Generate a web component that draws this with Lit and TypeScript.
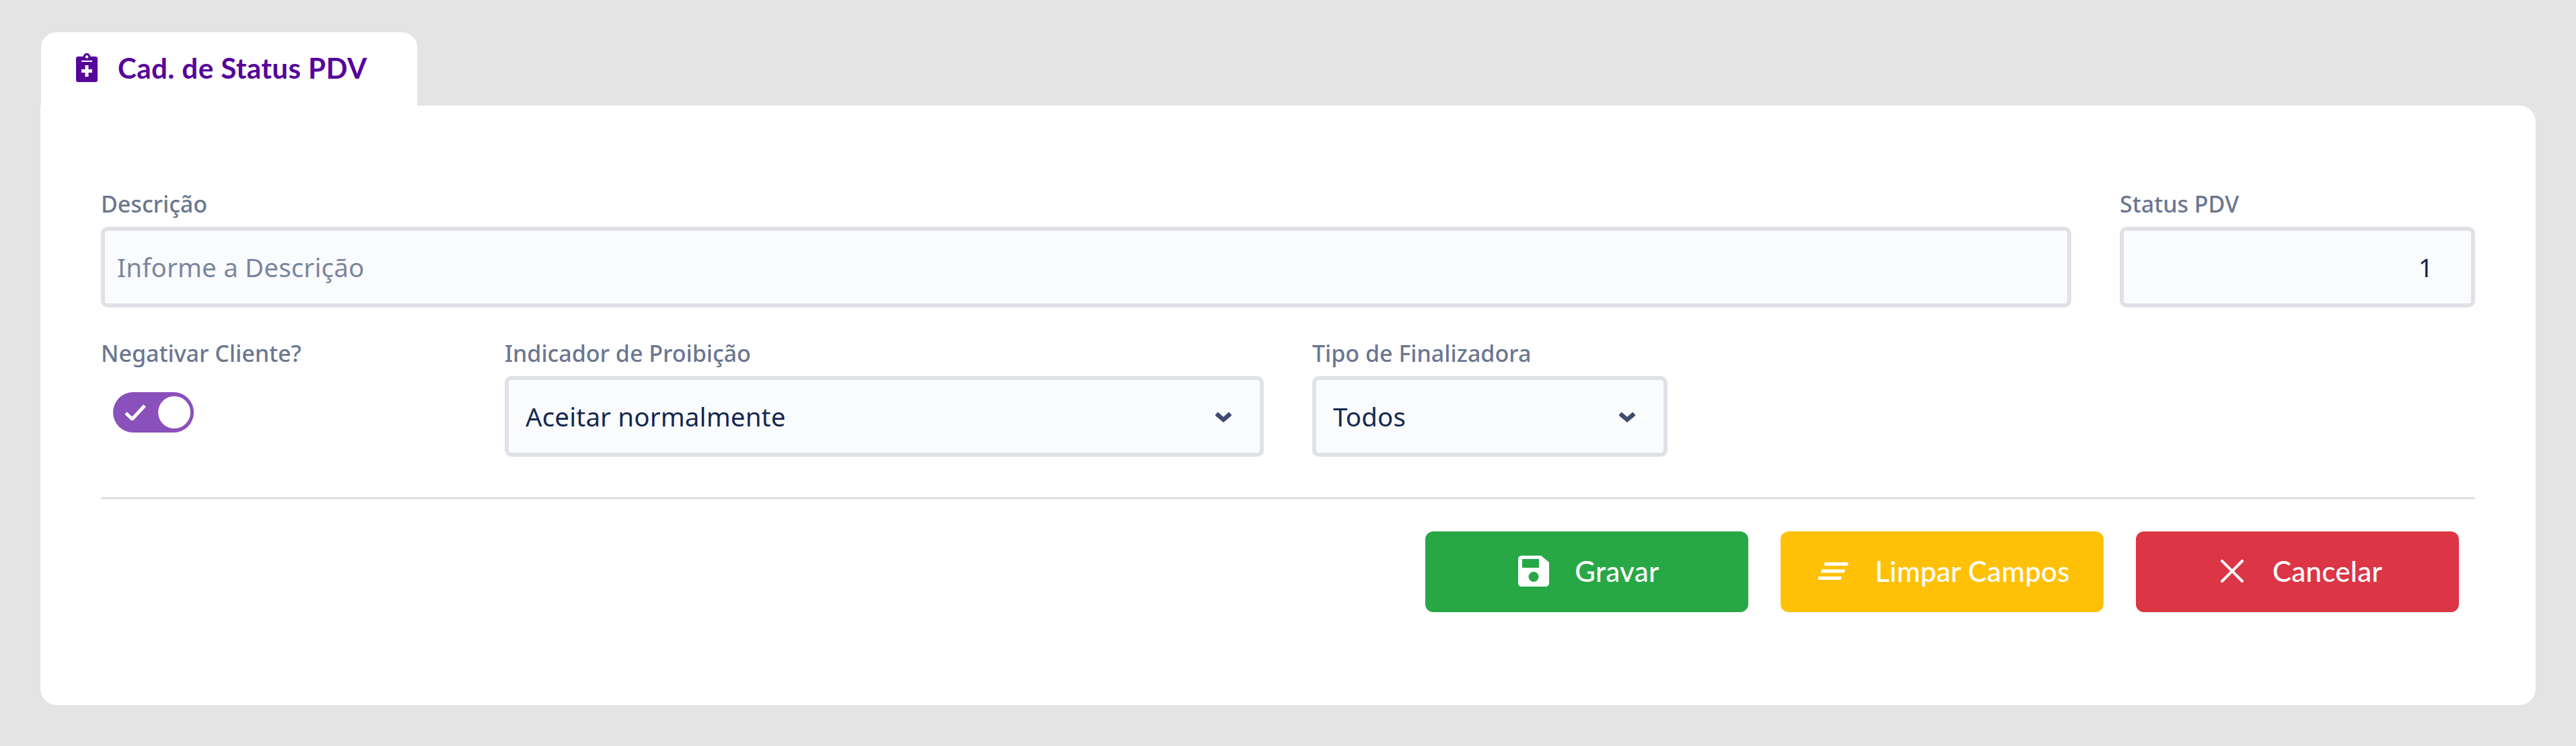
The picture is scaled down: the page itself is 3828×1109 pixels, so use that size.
import { LitElement, html, css } from "lit";
import { customElement } from "lit/decorators.js";

const chevron = html`<svg class="chev" viewBox="0 0 24 16"><path d="M0 4.500 3.800.5 12 7.700 20.200.5 24 4.500V6L12 16 0 6Z" fill="#3e4c6e"/></svg>`;

@customElement("app-root")
export class AppRoot extends LitElement {
  static styles = css`
    :host { display: block; min-height: 1109px; box-sizing: border-box; background: #e4e4e4; padding: 46px 60px 0; font-family: "Noto Sans", sans-serif; }
    * { box-sizing: border-box; }
    .tab { width: 561px; height: 111px; background: #fff; border-radius: 24px 24px 0 0; border: solid #e0e5e9; border-width: 2px 1px 0; display: flex; align-items: flex-start; padding: 31px 0 0 52px; gap: 30px; color: #56039b; font: 700 42px/44px Lato, sans-serif; letter-spacing: 0.45px; }
    .tab svg { width: 32px; height: 43px; flex: none; }
    .card { height: 891px; background: #fff; border-radius: 0 24px 24px 24px; padding: 126px 90px 0; }
    .row1 { display: grid; grid-template-columns: 1fr 528px; column-gap: 72px; }
    .row2 { display: grid; grid-template-columns: 528px 1128px 528px; column-gap: 72px; margin-top: 48px; }
    .lbl { display: block; height: 54px; font-size: 34px; line-height: 40px; font-weight: 500; color: #6b7790; white-space: nowrap; }
    .input, .select { width: 100%; height: 120px; border: 6px solid #dfe1e6; border-radius: 10px; background: #fafbfd; font: 400 38.4px "Noto Sans", sans-serif; letter-spacing: 0.2px; color: #152850; outline: none; }
    .input { padding: 0 26px 0 18px; display: block; }
    .input::placeholder { color: #7a869e; opacity: 1; }
    .num { text-align: right; padding-right: 56px; }
    .selwrap { position: relative; }
    .select { appearance: none; padding: 0 90px 0 25px; }
    .chev { position: absolute; width: 24px; height: 16px; right: 48px; top: 53px; pointer-events: none; }
    .toggle { margin: 24px 0 0 18px; width: 120px; height: 60px; border-radius: 30px; background: #8a50bb; display: flex; align-items: center; justify-content: space-between; padding: 0 5px 0 17px; }
    .toggle i { display: block; width: 48px; height: 48px; border-radius: 50%; background: #fff; }
    .toggle svg { width: 32px; height: 24px; }
    hr { border: 0; height: 3px; background: #dedfe2; margin: 60px 0 48px; }
    .actions { display: flex; justify-content: flex-end; gap: 48px; padding-right: 24px; }
    .btn { width: 480px; height: 120px; border: 0; border-radius: 12px; color: #fff; display: flex; align-items: center; justify-content: center; padding: 0 0 2px 6px; font: 500 42px/50px Lato, sans-serif; letter-spacing: 0.3px; }
    .btn svg { flex: none; display: block; }
    .green { background: #28a745; gap: 38px; }
    .yellow { background: #ffc107; gap: 39px; }
    .red { background: #dc3545; gap: 43px; padding-left: 12px; }
  `;

  render() {
    return html`
      <div class="tab">
        <svg viewBox="0 0 32 43"><path fill="#56039b" fill-rule="evenodd" d="M3 5h7.500C11 2 13.200 0 16 0s5 2 5.500 5H29c1.700 0 3 1.300 3 3v32c0 1.700-1.300 3-3 3H3c-1.700 0-3-1.300-3-3V8c0-1.700 1.300-3 3-3ZM16 3.200a2.300 2.300 0 1 0 0 4.600 2.300 2.300 0 0 0 0-4.600ZM8 11v2h16v-2ZM13.500 18v6H8v5h5.500v6h5v-6H24v-5h-5.500v-6Z"/></svg>
        <span>Cad. de Status PDV</span>
      </div>
      <div class="card">
        <div class="row1">
          <div><label class="lbl">Descrição</label><input class="input" placeholder="Informe a Descrição" /></div>
          <div><label class="lbl">Status PDV</label><input class="input num" value="1" /></div>
        </div>
        <div class="row2">
          <div>
            <label class="lbl">Negativar Cliente?</label>
            <div class="toggle">
              <svg viewBox="0 0 32 24"><path d="M2 13l9.500 9L30 2" fill="none" stroke="#fff" stroke-width="5"/></svg>
              <i></i>
            </div>
          </div>
          <div><label class="lbl">Indicador de Proibição</label>
            <div class="selwrap"><select class="select"><option>Aceitar normalmente</option></select>${chevron}</div></div>
          <div><label class="lbl">Tipo de Finalizadora</label>
            <div class="selwrap"><select class="select"><option>Todos</option></select>${chevron}</div></div>
        </div>
        <hr />
        <div class="actions">
          <button class="btn green">
            <svg width="46" height="46" viewBox="0 0 46 46"><path fill="#fff" fill-rule="evenodd" d="M5 0h29l12 10v31c0 2.800-2.200 5-5 5H5c-2.800 0-5-2.200-5-5V5c0-2.800 2.200-5 5-5ZM6 5v13h25V5ZM23 24a7.500 7.500 0 1 0 0 15 7.500 7.500 0 0 0 0-15Z"/></svg>
            <span>Gravar</span>
          </button>
          <button class="btn yellow">
            <svg width="45" height="26" viewBox="0 0 45 26"><path fill="#fff" d="M10 0h35l-1.500 5H8.500ZM5 10.500h35L38.500 15.500H3.500ZM0 21h35l-1.500 5H0Z"/></svg>
            <span>Limpar Campos</span>
          </button>
          <button class="btn red">
            <svg width="34" height="34" viewBox="0 0 34 34"><path d="M2 2l30 30M32 2L2 32" fill="none" stroke="#fff" stroke-width="4" stroke-linecap="round"/></svg>
            <span>Cancelar</span>
          </button>
        </div>
      </div>
    `;
  }
}
